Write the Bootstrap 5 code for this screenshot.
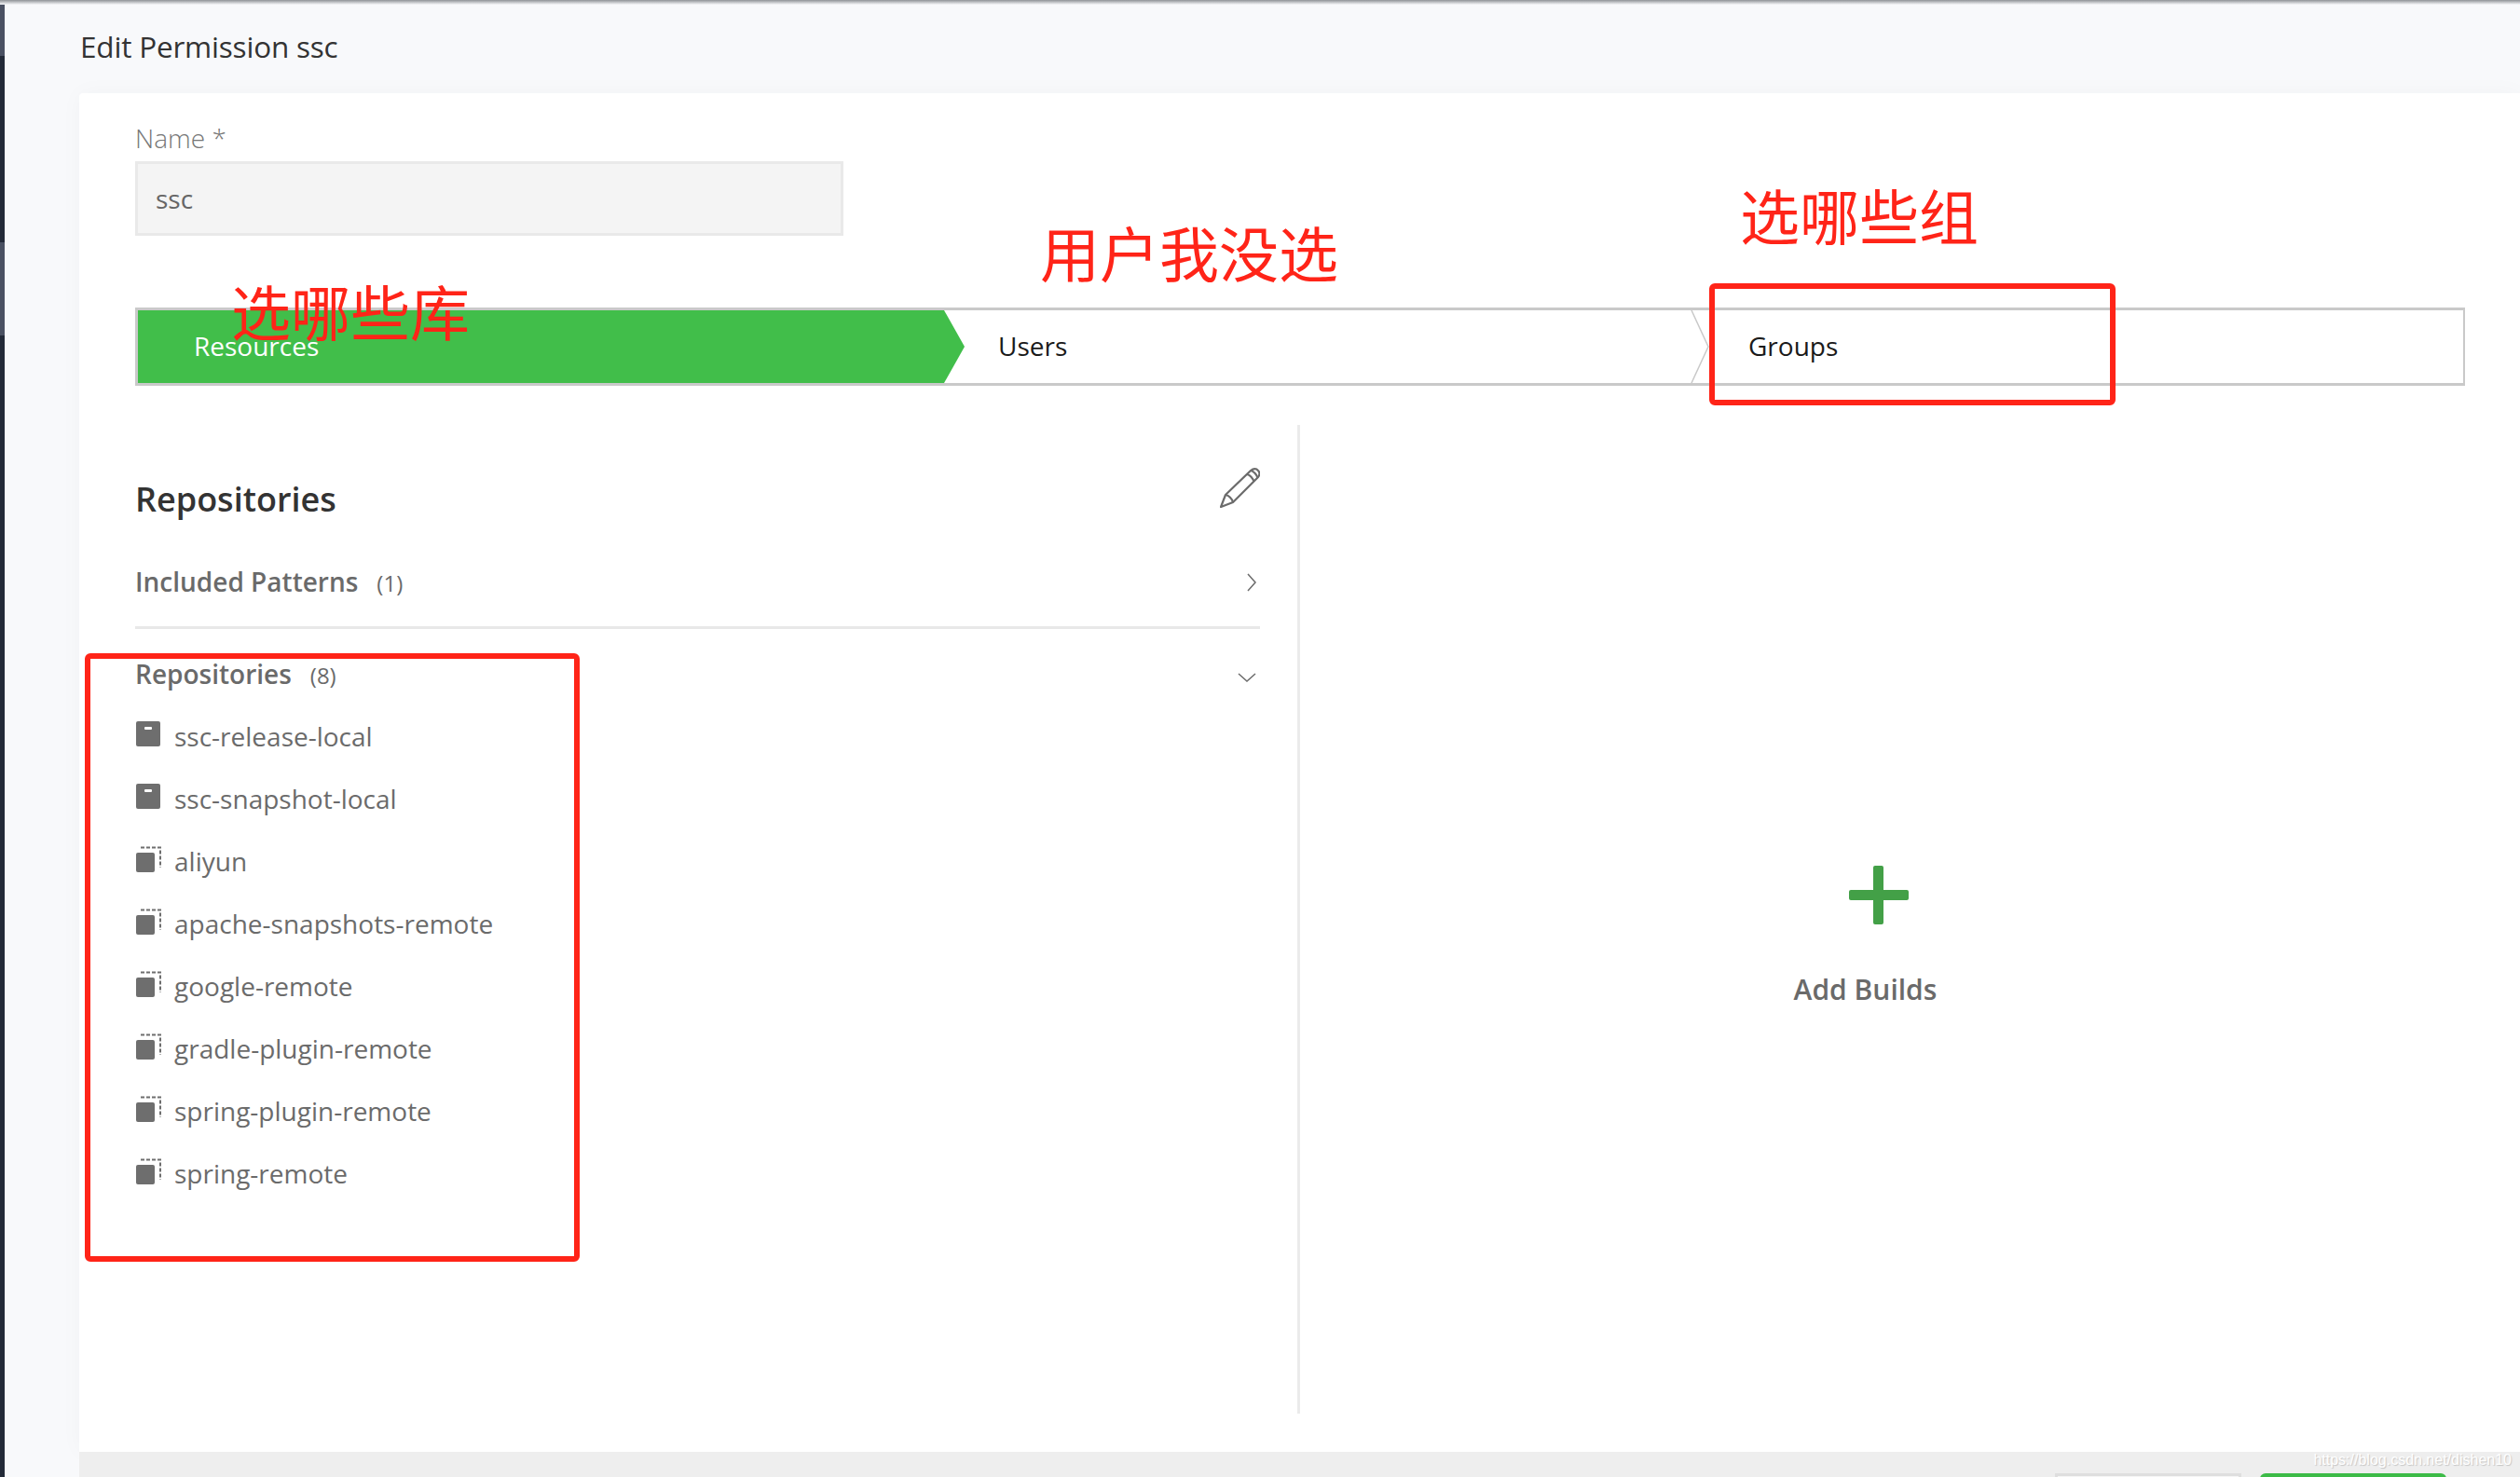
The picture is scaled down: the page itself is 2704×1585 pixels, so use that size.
<!DOCTYPE html>
<html lang="en">
<head>
<meta charset="utf-8">
<title>Edit Permission ssc</title>
<link href="https://cdn.jsdelivr.net/npm/bootstrap@5.3.0/dist/css/bootstrap.min.css" rel="stylesheet">
<style>
html,body{height:1585px;overflow:hidden;background:#f8f9fb;}
body{font-family:"Open Sans","Liberation Sans",sans-serif;color:#5f5f5f;position:relative;}
.app-shell{height:1585px;}
.side-strip{width:5px;flex:none;background:linear-gradient(#4a5162 0,#4a5162 60px,#232a38 60px,#232a38 260px,#4a5162 260px,#4a5162 360px,#232a38 360px);}
.top-shade{position:absolute;left:0;right:0;top:0;height:5px;background:linear-gradient(#8f9296,#f8f9fb);}
.main-area{width:2699px;}
.page-head{height:100px;padding:28px 0 0 81px;font-size:31.500px;line-height:44px;color:#333;letter-spacing:-.2px;}
.sheet{margin-left:80px;height:1458px;background:#fff;border-radius:4px 0 0 0;box-shadow:0 0 24px rgba(0,0,0,.03);padding:29px 59px 0 60px;}
.field-label{font-size:28px;line-height:38px;font-weight:300;color:#777;margin:0 0 6px;}
.field-input{width:760px;height:80px;border:3px solid #e9e9e9!important;border-radius:0;background:#f4f4f4!important;font-size:28px;color:#666!important;padding:0 19px;opacity:1;}
.step-bar{margin-top:77px;height:84px;border:3px solid #c9c9c9;border-right-width:2px;}
.step-item{position:relative;font-size:28px;line-height:76px;color:#1a1a1a;}
.step-one{width:887px;padding-left:60px;color:#fff;}
.step-one-fill{position:absolute;inset:0;height:78px;background:#41be4a;clip-path:polygon(0 0,865px 0,887px 50%,865px 100%,0 100%);}
.step-one span{position:relative;}
.step-two{width:800px;padding-left:36px;}
.step-three{flex:1;padding-left:41px;}
.step-tip{position:absolute;top:0;height:78px;width:24px;}
.work-row{margin-top:42px;height:1061px;}
.left-pane{width:1250px;padding-right:40px;border-right:3px solid #ebebeb;}
.right-pane{flex:1;padding:473px 10px 0 0;}
.pane-title{font-size:36px;line-height:48px;font-weight:600;color:#333;margin:0;}
.head-row{padding-top:56px;height:104px;}
.pencil-ico{width:43px;height:43px;margin-top:-10px;}
.group-row{font-size:28px;font-weight:600;line-height:40px;color:#6a6a6a;}
.group-count{font-size:24px;font-weight:400;margin-left:20px;}
.rule-line{border-bottom:3px solid #e8e8e8;height:115px;padding-top:44px;margin-bottom:0;}
.group-open{margin-top:28px;height:40px;}
.chev-r{margin-top:11px;margin-right:4px;}
.chev-d{margin-top:19px;margin-right:4px;}
.repo-list{margin:14px 0 0;}
.repo-row{height:67px;font-size:28px;line-height:67px;color:#6b6b6b;}
.repo-ico{width:28px;height:28px;margin-right:14px;margin-top:-6px;flex:none;}
.plus-ico{width:64px;height:63px;margin-left:1px;}
.add-text{font-size:30px;font-weight:600;color:#6a6a6a;line-height:40px;margin:50px 27px 0 0;}
.foot-strip{position:absolute;left:85px;right:0;top:1558px;height:27px;background:#eeeeee;}
.foot-btn{position:absolute;top:23px;width:200px;height:20px;}
.foot-cancel{left:2120px;background:#f5f5f5;border:3px solid #dedede;}
.foot-save{left:2340px;background:#3cbb47;border-radius:6px 6px 0 0;}
.mark-url{position:absolute;right:9px;top:0;font-family:"Liberation Sans",sans-serif;font-size:16px;line-height:18px;color:#fff;text-shadow:1px 1px 1px #c4c4c4;}
.note-text{position:absolute;font-family:"Noto Sans CJK SC",sans-serif;font-size:64px;line-height:72px;color:#ff2418;font-weight:400;white-space:nowrap;}
.note-a{left:248px;top:296px;}
.note-b{left:1116px;top:233px;}
.note-c{left:1867px;top:193px;}
.red-box{position:absolute;border:6px solid #ff2418;border-radius:6px;}
.box-a{left:91px;top:701px;width:531px;height:653px;}
.box-b{left:1834px;top:304px;width:436px;height:131px;}
</style>
</head>
<body>
<div class="d-flex app-shell">
  <div class="side-strip"></div>
  <div class="main-area">
    <div class="page-head">Edit Permission ssc</div>
    <div class="sheet">
      <label class="field-label d-block" for="nameField">Name *</label>
      <input id="nameField" class="form-control field-input" value="ssc" disabled>

      <div class="step-bar d-flex">
        <div class="step-item step-one">
          <div class="step-one-fill"></div><span>Resources</span>
        </div>
        <div class="step-item step-two">Users
          <svg class="step-tip" style="left:779px" viewBox="0 0 24 78" fill="none" stroke="#c9c9c9" stroke-width="1.5"><path d="M1 0 19 39 1 78"/></svg>
        </div>
        <div class="step-item step-three">Groups</div>
      </div>

      <div class="work-row d-flex">
        <div class="left-pane">
          <div class="head-row d-flex justify-content-between align-items-start">
            <h2 class="pane-title">Repositories</h2>
            <svg class="pencil-ico" viewBox="0 0 43 43" fill="none" stroke="#6b6b6b" stroke-width="2.2" stroke-linejoin="round"><path d="M1 42 6 29 33 3c3-2.500 6-2.500 8 0 2 2 2 5-.5 7.500L14 37Z"/><path d="M6 29c3.500.5 7 4 8 8M29 7c3 .5 6.500 4 7.500 8M33 3c3 .5 6.500 4 7.500 8"/></svg>
          </div>
          <div class="group-row rule-line d-flex justify-content-between">
            <div>Included Patterns<span class="group-count">(1)</span></div>
            <svg width="10" height="20" class="chev-r" viewBox="0 0 10 20" fill="none" stroke="#6b6b6b" stroke-width="1.5"><path d="M1 1 9 10 1 19"/></svg>
          </div>
          <div class="group-row group-open d-flex justify-content-between">
            <div>Repositories<span class="group-count">(8)</span></div>
            <svg width="20" height="10" class="chev-d" viewBox="0 0 20 10" fill="none" stroke="#6b6b6b" stroke-width="1.5"><path d="M1 1 10 9 19 1"/></svg>
          </div>
          <ul class="repo-list list-unstyled">
            <li class="repo-row d-flex align-items-center"><svg class="repo-ico" viewBox="0 0 28 28"><rect y="0" x="1" width="26" height="27" rx="2" fill="#6e6e6e"/><rect x="10" y="6" width="8" height="3" rx="1" fill="#fff"/></svg>ssc-release-local</li>
            <li class="repo-row d-flex align-items-center"><svg class="repo-ico" viewBox="0 0 28 28"><rect y="0" x="1" width="26" height="27" rx="2" fill="#6e6e6e"/><rect x="10" y="6" width="8" height="3" rx="1" fill="#fff"/></svg>ssc-snapshot-local</li>
            <li class="repo-row d-flex align-items-center"><svg class="repo-ico" viewBox="0 0 28 28"><path d="M6 1.500H27V23" fill="none" stroke="#6e6e6e" stroke-width="2" stroke-dasharray="4 2"/><rect x="1" y="7" width="20" height="21" rx="2" fill="#6e6e6e"/></svg>aliyun</li>
            <li class="repo-row d-flex align-items-center"><svg class="repo-ico" viewBox="0 0 28 28"><path d="M6 1.500H27V23" fill="none" stroke="#6e6e6e" stroke-width="2" stroke-dasharray="4 2"/><rect x="1" y="7" width="20" height="21" rx="2" fill="#6e6e6e"/></svg>apache-snapshots-remote</li>
            <li class="repo-row d-flex align-items-center"><svg class="repo-ico" viewBox="0 0 28 28"><path d="M6 1.500H27V23" fill="none" stroke="#6e6e6e" stroke-width="2" stroke-dasharray="4 2"/><rect x="1" y="7" width="20" height="21" rx="2" fill="#6e6e6e"/></svg>google-remote</li>
            <li class="repo-row d-flex align-items-center"><svg class="repo-ico" viewBox="0 0 28 28"><path d="M6 1.500H27V23" fill="none" stroke="#6e6e6e" stroke-width="2" stroke-dasharray="4 2"/><rect x="1" y="7" width="20" height="21" rx="2" fill="#6e6e6e"/></svg>gradle-plugin-remote</li>
            <li class="repo-row d-flex align-items-center"><svg class="repo-ico" viewBox="0 0 28 28"><path d="M6 1.500H27V23" fill="none" stroke="#6e6e6e" stroke-width="2" stroke-dasharray="4 2"/><rect x="1" y="7" width="20" height="21" rx="2" fill="#6e6e6e"/></svg>spring-plugin-remote</li>
            <li class="repo-row d-flex align-items-center"><svg class="repo-ico" viewBox="0 0 28 28"><path d="M6 1.500H27V23" fill="none" stroke="#6e6e6e" stroke-width="2" stroke-dasharray="4 2"/><rect x="1" y="7" width="20" height="21" rx="2" fill="#6e6e6e"/></svg>spring-remote</li>
          </ul>
        </div>
        <div class="right-pane d-flex flex-column align-items-center">
          <svg class="plus-ico" viewBox="0 0 64 63"><rect x="26" y="0" width="11" height="63" rx="2" fill="#43a047"/><rect x="0" y="26" width="64" height="11" rx="2" fill="#43a047"/></svg>
          <div class="add-text">Add Builds</div>
        </div>
      </div>
    </div>
  </div>
</div>
<div class="top-shade"></div>
<div class="foot-strip">
  <div class="foot-btn foot-cancel"></div>
  <div class="foot-btn foot-save"></div>
  <div class="mark-url">https://blog.csdn.net/dishen10</div>
</div>
<div class="note-text note-a">选哪些库</div>
<div class="note-text note-b">用户我没选</div>
<div class="note-text note-c">选哪些组</div>
<div class="red-box box-a"></div>
<div class="red-box box-b"></div>
</body>
</html>
